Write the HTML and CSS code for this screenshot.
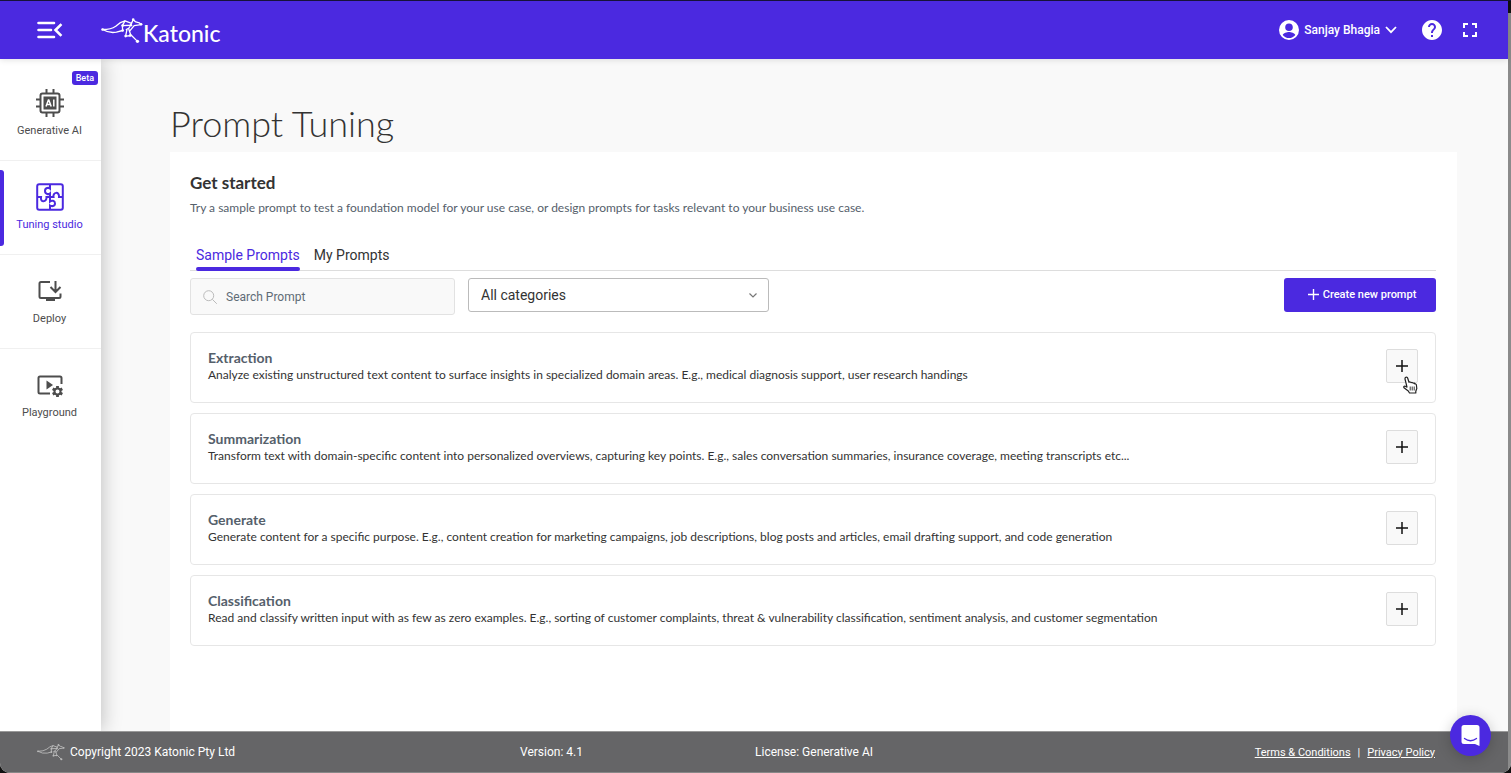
FILE: index.html
```html
<!DOCTYPE html>
<html lang="en">
<head>
<meta charset="utf-8">
<title>Prompt Tuning</title>
<link rel="stylesheet" href="styles.css">
</head>
<body>
<svg class="defs" width="0" height="0" aria-hidden="true">
  <symbol id="roo" viewBox="18 24 126 82">
    <g fill="none" stroke="currentColor" stroke-linecap="round" stroke-linejoin="round">
      <path stroke-width="4" d="M22 62 Q48 62 62 52 Q76 39 90 36 L110 43 L115 32 L123 39 L134 42 L139 47 L118 50 L104 67"/>
      <path stroke-width="4" d="M22 62 Q42 74 64 70 L83 65 L82 50 L108 49 M82 50 L90 36 M94 62 L102 58 L110 43 M96 62 L92 82 L105 81 M102 62 L107 77 L128 98"/>
    </g>
    <g fill="currentColor"><circle cx="22" cy="62" r="4"/><circle cx="83" cy="65" r="4"/><circle cx="83" cy="50" r="4"/><circle cx="108" cy="49" r="4"/><circle cx="115" cy="32" r="4"/><circle cx="139" cy="46" r="4"/><circle cx="92" cy="82" r="4"/><circle cx="106" cy="80" r="4"/><circle cx="128" cy="98" r="5"/></g>
  </symbol>
  <symbol id="plus" viewBox="0 0 12 12"><path d="M6 0v12M0 6h12" stroke="currentColor" stroke-width="1.5"/></symbol>
</svg>
<div class="app">
  <header class="topbar">
    <button class="icon-btn menu" aria-label="Collapse menu"><svg width="26" height="18" viewBox="0 0 26 18" fill="none" stroke="currentColor" stroke-width="2.6" stroke-linecap="round"><path d="M1.5 2h15.5M1.5 9h12.500M1.500 16h15.500"/><path d="M23.500 4L18.500 9l5 5" stroke-linecap="square"/></svg></button>
    <a class="brand" href="#"><svg width="42" height="27"><use href="#roo"/></svg><span>Katonic</span></a>
    <button class="icon-btn user"><svg width="20" height="20" viewBox="2 2 20 20" fill="currentColor"><path fill-rule="evenodd" d="M12 2a10 10 0 1 0 0 20 10 10 0 0 0 0-20zm0 3.500a3.800 3.800 0 1 1 0 7.600 3.800 3.800 0 0 1 0-7.600zM12 20a8 8 0 0 1-6.300-3.100c.6-2 4.200-3 6.300-3s5.700 1 6.300 3A8 8 0 0 1 12 20z"/></svg><span>Sanjay Bhagia</span><svg width="12" height="8" viewBox="0 0 12 8" fill="none" stroke="currentColor" stroke-width="1.800"><path d="M1 1l5 5.200L11 1"/></svg></button>
    <button class="icon-btn help" aria-label="Help"><svg width="20" height="20" viewBox="2 2 20 20" fill="currentColor"><path d="M12 2C6.480 2 2 6.480 2 12s4.480 10 10 10 10-4.480 10-10S17.520 2 12 2zm1 17h-2v-2h2v2zm2.070-7.750l-.9.920C13.450 12.900 13 13.500 13 15h-2v-.5c0-1.100.45-2.100 1.170-2.830l1.240-1.260c.37-.36.590-.86.590-1.410 0-1.100-.9-2-2-2s-2 .9-2 2H8c0-2.210 1.790-4 4-4s4 1.790 4 4c0 .88-.36 1.680-.93 2.250z"/></svg></button>
    <button class="icon-btn" aria-label="Full screen"><svg width="14" height="14" viewBox="0 0 14 14" fill="none" stroke="currentColor" stroke-width="2"><path d="M1 5V1h4M9 1h4v4M13 9v4H9M5 13H1V9"/></svg></button>
  </header>
  <div class="body">
    <nav class="sidebar">
      <a class="nav-item" href="#"><span class="badge">Beta</span>
        <svg width="28" height="28" viewBox="0 0 28 28" fill="none" stroke="currentColor" stroke-width="2"><rect x="4.500" y="4.500" width="19" height="19" rx="2"/><path d="M10.500 0v4M17.500 0v4M10.500 24v4M17.500 24v4M0 10.500h4M0 17.500h4M24 10.500h4M24 17.500h4"/><rect x="7.500" y="7.500" width="13" height="13" fill="currentColor" stroke="none"/><path d="M10 17.500l2.400-6.500h.4l2.400 6.500M11 15.500h3.400M17.800 10.500v7" stroke="#fff" stroke-width="1.500"/></svg>
        <span>Generative AI</span></a>
      <a class="nav-item active" href="#">
        <svg width="28" height="28" viewBox="0 0 28 28" fill="none" stroke="currentColor" stroke-width="2"><rect x="1.200" y="1.200" width="25.600" height="25.600" rx="2"/><path d="M14 1v4.500c-1-1-5-1-5 2.500s4 3.500 5 2.500V14h3.500c-1-5 6-6 5.500 0h4M1 14h4c-1 6 6 5.500 5.500 0H14v4.500c1.500-1.500 5-1 5 2s-3.500 3-5 2V27"/></svg>
        <span>Tuning studio</span></a>
      <a class="nav-item" href="#">
        <svg width="28" height="28" viewBox="0 0 28 28" fill="none" stroke="currentColor" stroke-width="2"><path d="M14 5H5q-1.500 0-1.500 1.500v13q0 1.500 1.500 1.500h18q1.500 0 1.500-1.500v-3M19.500 4v10.500M14.500 10l5 5 5-5"/><path d="M10 22.500h9" stroke-width="3"/></svg>
        <span>Deploy</span></a>
      <a class="nav-item" href="#">
        <svg width="28" height="28" viewBox="0 0 28 28" fill="none" stroke="currentColor" stroke-width="2"><path d="M14 22.500H4q-1.500 0-1.500-1.500V7q0-1.500 1.500-1.500h20q1.500 0 1.500 1.500v6"/><path d="M10.500 9.500v9l6.500-4.500z" fill="currentColor" stroke="none"/><circle cx="21.500" cy="20.500" r="3"/><path d="M21.500 15v2.500M21.500 23.500V26M16.700 17.800l2.200 1.200M24.100 22l2.200 1.200M16.700 23.200l2.200-1.200M24.100 19l2.200-1.200" stroke-width="2.800"/></svg>
        <span>Playground</span></a>
    </nav>
    <main class="content">
      <h1>Prompt Tuning</h1>
      <section class="panel">
        <h2>Get started</h2>
        <p class="intro">Try a sample prompt to test a foundation model for your use case, or design prompts for tasks relevant to your business use case.</p>
        <div class="tabs" role="tablist">
          <button class="tab selected" role="tab" aria-selected="true">Sample Prompts</button>
          <button class="tab" role="tab" aria-selected="false">My Prompts</button>
        </div>
        <div class="tools">
          <label class="search"><svg width="14" height="14" viewBox="0 0 14 14" fill="none" stroke="currentColor"><circle cx="5.700" cy="5.700" r="5"/><path d="M9.300 9.300l4.500 4.500"/></svg><input type="text" placeholder="Search Prompt" aria-label="Search Prompt"></label>
          <div class="select"><select aria-label="Category"><option>All categories</option></select><svg width="8" height="5" viewBox="0 0 8 5" fill="none" stroke="currentColor" stroke-width="1.200"><path d="M.5.500L4 4 7.500.500"/></svg></div>
          <button class="create"><svg width="11" height="11"><use href="#plus"/></svg>Create new prompt</button>
        </div>
        <div class="cards">
          <article class="card"><div><h3>Extraction</h3><p>Analyze existing unstructured text content to surface insights in specialized domain areas. E.g., medical diagnosis support, user research handings</p></div>
            <button class="add" aria-label="Add Extraction"><svg width="12" height="12"><use href="#plus"/></svg></button>
            <svg class="cursor" width="16" height="18" viewBox="0 0 16 18" fill="#fff" stroke="#222" stroke-width="1.200" stroke-linejoin="round"><path d="M3.500 1.500c1-.8 2 0 2.300 1L7 6.300c.8-.6 1.800-.3 2 .4.900-.5 1.800-.2 2 .5 1-.4 1.700 0 1.900.8.900-.2 1.400.2 1.500 1l.4 3.500-1 2.800V17H7.500L6.300 15 2 11.800c-.8-1 .2-2 1.300-1.500l1.700.8-2-8.100q-.1-1 .5-1.500z"/><path d="M8.200 10.500v4M10.200 10.500v4M12.200 10.500v4" stroke-width=".9"/></svg></article>
          <article class="card"><div><h3>Summarization</h3><p>Transform text with domain-specific content into personalized overviews, capturing key points. E.g., sales conversation summaries, insurance coverage, meeting transcripts etc...</p></div>
            <button class="add" aria-label="Add Summarization"><svg width="12" height="12"><use href="#plus"/></svg></button></article>
          <article class="card"><div><h3>Generate</h3><p>Generate content for a specific purpose. E.g., content creation for marketing campaigns, job descriptions, blog posts and articles, email drafting support, and code generation</p></div>
            <button class="add" aria-label="Add Generate"><svg width="12" height="12"><use href="#plus"/></svg></button></article>
          <article class="card"><div><h3>Classification</h3><p>Read and classify written input with as few as zero examples. E.g., sorting of customer complaints, threat &amp; vulnerability classification, sentiment analysis, and customer segmentation</p></div>
            <button class="add" aria-label="Add Classification"><svg width="12" height="12"><use href="#plus"/></svg></button></article>
        </div>
      </section>
    </main>
  </div>
  <footer class="footer">
    <div class="copyright"><svg width="28" height="18"><use href="#roo"/></svg><span>Copyright 2023 Katonic Pty Ltd</span></div>
    <span>Version: 4.1</span>
    <span>License: Generative AI</span>
    <div class="legal"><a href="#">Terms &amp; Conditions</a><span>|</span><a href="#">Privacy Policy</a></div>
  </footer>
  <button class="chat" aria-label="Open chat"><svg width="20" height="22" viewBox="0 0 20 22"><path d="M3 0h13q2.500 0 2.500 2.500V21L14 19H3Q.500 19 .500 16.500v-14Q.500 0 3 0z" fill="#fff"/><path d="M3.500 13.500q6 4.500 12 0" fill="none" stroke="#4b29e0" stroke-width="1.300" stroke-linecap="round"/></svg></button>
</div>
</body>
</html>
```
FILE: styles.css
```css
* { box-sizing: border-box; }
body {
  margin: 0;
  background: #111;
  font-family: Roboto, "Liberation Sans", sans-serif;
  font-size: 12px;
  color: #333;
}
h1, h2, h3, p { margin: 0; }
button, input, select { font: inherit; color: inherit; }
button { border: 0; padding: 0; background: none; cursor: pointer; }
a { color: inherit; text-decoration: none; }
svg { display: block; flex: none; }
.defs { position: absolute; }

.app {
  position: relative;
  min-height: 100vh;
  display: flex;
  flex-direction: column;
  padding-right: 3px;
  border-top: 1px solid #16123a;
  border-radius: 0 0 10px 10px;
  background: linear-gradient(#111 12px, #8b8b8b 12px) right / 3px 100% no-repeat #f9f9f9;
  overflow: hidden;
}

.topbar {
  position: relative;
  z-index: 2;
  height: 58px;
  padding: 0 31px 0 37px;
  display: flex;
  align-items: center;
  background: #4b29e0;
  color: #fff;
  box-shadow: 0 1px 6px rgba(0, 0, 0, .12);
}
.icon-btn { display: flex; align-items: center; }
.brand { display: flex; align-items: center; margin-left: 38px; }
.brand span {
  font: 500 23px/26px Lato, sans-serif;
  padding-top: 6px;
}
.user { margin-left: auto; gap: 5px; font-weight: 500; }
.help { margin: 0 21px 0 25px; }

.body { flex: 1; display: flex; }
.sidebar {
  position: relative;
  z-index: 1;
  width: 101px;
  padding-top: 8px;
  background: #fff;
  box-shadow: 2px 0 18px rgba(0, 0, 0, .22);
}
.nav-item {
  position: relative;
  height: 94px;
  display: flex;
  flex-direction: column;
  align-items: center;
  justify-content: center;
  gap: 7px;
  padding: 0 2px 1px 0;
  border-bottom: 1px solid #f0f0f0;
  font-size: 11px;
  line-height: 14px;
  color: #4d4d4d;
}
.nav-item:last-child { border-bottom: 0; }
.nav-item.active { color: #4b29e0; }
.nav-item.active::before {
  content: "";
  position: absolute;
  left: 0;
  top: 9px;
  bottom: 8px;
  width: 4px;
  border-radius: 0 3px 3px 0;
  background: #4b29e0;
}
.badge {
  position: absolute;
  top: 4px;
  right: 3px;
  padding: 0 4px;
  border-radius: 3px;
  background: #4b29e0;
  color: #fff;
  font-size: 9px;
  font-weight: 500;
}

.content {
  flex: 1;
  min-width: 0;
  display: flex;
  flex-direction: column;
  padding: 41px 51px 0 69px;
}
h1 { font: 300 36px/46px Lato, sans-serif; margin-bottom: 6px; }
.panel { flex: 1; padding: 20px 21px 20px 20px; background: #fff; }
h2 { font: 700 17px/22px Lato, sans-serif; }
.intro { margin-top: 6px; font: 400 12px/16px Lato, sans-serif; color: #55606b; }

.tabs {
  display: flex;
  gap: 14px;
  margin-top: 25px;
  padding-left: 6px;
  border-bottom: 1px solid #ddd;
}
.tab {
  height: 30px;
  margin-bottom: -1px;
  padding-bottom: 2px;
  font-size: 14px;
}
.tab.selected { position: relative; color: #4b29e0; }
.tab.selected::after {
  content: "";
  position: absolute;
  left: 0;
  right: 0;
  bottom: 0;
  height: 4px;
  border-radius: 2px;
  background: #4b29e0;
}

.tools { display: flex; align-items: flex-start; gap: 13px; margin-top: 7px; }
.search {
  width: 265px;
  height: 37px;
  display: flex;
  align-items: center;
  gap: 9px;
  padding: 0 12px;
  border: 1px solid #e2e2e2;
  border-radius: 3px;
  background: #f9f9f9;
  color: #bbb;
}
.search input {
  flex: 1;
  min-width: 0;
  padding: 0;
  border: 0;
  outline: 0;
  background: none;
  color: #333;
}
.search input::placeholder { color: #5f6b76; opacity: 1; }
.select { position: relative; width: 301px; }
.select select {
  appearance: none;
  width: 100%;
  height: 34px;
  padding: 0 12px;
  border: 1px solid #bbb;
  border-radius: 3px;
  background: #fff;
  font-size: 14px;
}
.select svg { position: absolute; right: 12px; top: 15px; color: #777; pointer-events: none; }
.create {
  display: flex;
  align-items: center;
  justify-content: center;
  gap: 4px;
  width: 152px;
  height: 34px;
  margin-left: auto;
  padding: 0 0 1px 4px;
  border-radius: 3px;
  background: #4b29e0;
  color: #fff;
  font-size: 11px;
  font-weight: 500;
}

.cards { display: flex; flex-direction: column; gap: 10px; margin-top: 17px; }
.card {
  position: relative;
  min-height: 71px;
  display: flex;
  align-items: center;
  justify-content: space-between;
  padding: 0 17px 3px;
  border: 1px solid #e6e6e6;
  border-radius: 4px;
}
.card h3 { font: 700 14px/18px Lato, sans-serif; color: #55606b; }
.card p { font: 400 12px/16px Lato, sans-serif; }
.add {
  width: 32px;
  height: 34px;
  display: grid;
  place-items: center;
  flex: none;
  border: 1px solid #ddd;
  border-radius: 2px;
  background: #f9f9f9;
  color: #111;
}
.cursor { position: absolute; right: 17px; top: 43px; }

.footer {
  position: relative;
  z-index: 2;
  height: 42px;
  display: grid;
  grid-template-columns: 483px 235px 1fr auto;
  align-items: center;
  padding: 0 73px 0 37px;
  background: #656567;
  border-top: 1px solid #999;
  border-bottom: 1px solid #888;
  color: #fff;
}
.copyright { display: flex; align-items: center; gap: 5px; }
.copyright svg { color: #bbb; }
.legal { display: flex; gap: 7px; font-size: 11px; }
.legal a { text-decoration: underline; }
.chat {
  position: absolute;
  z-index: 3;
  right: 20px;
  bottom: 17px;
  width: 41px;
  height: 41px;
  display: grid;
  place-items: center;
  border-radius: 50%;
  background: #4b29e0;
  box-shadow: 0 2px 14px rgba(0, 0, 0, .2);
}
```
